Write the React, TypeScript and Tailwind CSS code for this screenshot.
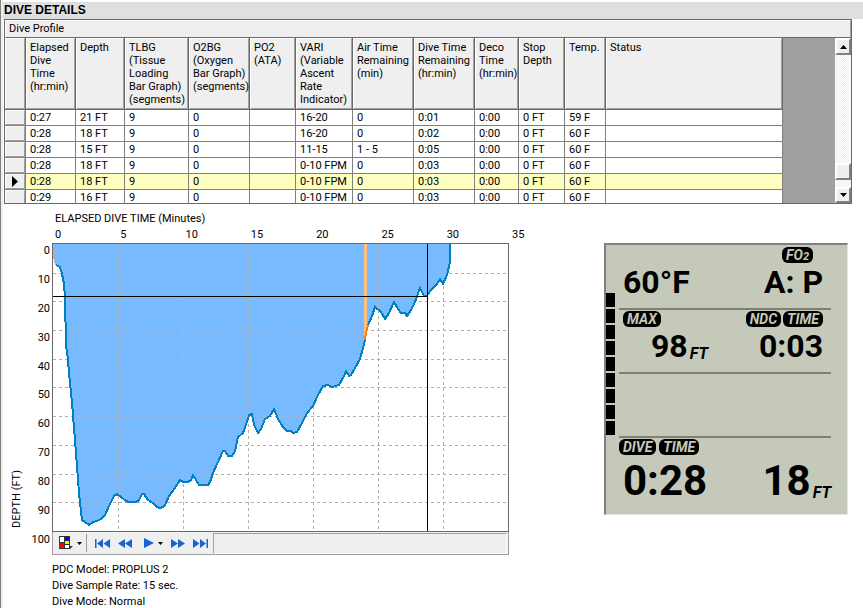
import React from "react";

const columns = [
  { label: "Elapsed\nDive\nTime\n(hr:min)", width: "w-[50px]" },
  { label: "Depth", width: "w-[49px]" },
  { label: "TLBG\n(Tissue\nLoading\nBar Graph)\n(segments)", width: "w-[64px]" },
  { label: "O2BG\n(Oxygen\nBar Graph)\n(segments)", width: "w-[61px]" },
  { label: "PO2\n(ATA)", width: "w-[46px]" },
  { label: "VARI\n(Variable\nAscent\nRate\nIndicator)", width: "w-[57px]" },
  { label: "Air Time\nRemaining\n(min)", width: "w-[61px]" },
  { label: "Dive Time\nRemaining\n(hr:min)", width: "w-[61px]" },
  { label: "Deco\nTime\n(hr:min)", width: "w-[44px]" },
  { label: "Stop\nDepth", width: "w-[46px]" },
  { label: "Temp.", width: "w-[41px]" },
  { label: "Status", width: "w-[177px]" },
];

const rows = [
  ["0:27", "21 FT", "9", "0", "", "16-20", "0", "0:01", "0:00", "0 FT", "59 F", ""],
  ["0:28", "18 FT", "9", "0", "", "16-20", "0", "0:02", "0:00", "0 FT", "60 F", ""],
  ["0:28", "15 FT", "9", "0", "", "11-15", "1 - 5", "0:05", "0:00", "0 FT", "60 F", ""],
  ["0:28", "18 FT", "9", "0", "", "0-10 FPM", "0", "0:03", "0:00", "0 FT", "60 F", ""],
  ["0:28", "18 FT", "9", "0", "", "0-10 FPM", "0", "0:03", "0:00", "0 FT", "60 F", ""],
  ["0:29", "16 FT", "9", "0", "", "0-10 FPM", "0", "0:03", "0:00", "0 FT", "60 F", ""],
];

const SELECTED_ROW = 4;

const raised =
  "border border-t-white border-l-white border-r-[#a0a0a0] border-b-[#a0a0a0] bg-[#efefef]";

const DiveTable = () => (
  <table className="table-fixed w-[778px] shrink-0 border-separate border-spacing-0 text-left">
    <thead>
      <tr className="h-[72px]">
        <th className="w-[21px] p-0 border-r border-b border-[#696969]">
          <div className={`h-[71px] ${raised}`} />
        </th>
        {columns.map((col) => (
          <th
            key={col.label}
            className={`${col.width} p-0 align-top font-normal leading-[13px] whitespace-pre border-r border-b border-[#696969]`}
          >
            <div className={`h-[71px] pl-[3px] pt-[2px] ${raised}`}>{col.label}</div>
          </th>
        ))}
      </tr>
    </thead>
    <tbody>
      {rows.map((row, r) => (
        <tr key={r} className={r === SELECTED_ROW ? "h-4 bg-[#ffffbf]" : "h-4 bg-white"}>
          <th className="p-0 border-r border-b border-[#808080]">
            <div className={`h-[15px] flex items-center justify-center ${raised}`}>
              {r === SELECTED_ROW && (
                <svg width="6" height="11" viewBox="0 0 6 11">
                  <path d="M0 0 L6 5.5 L0 11 Z" />
                </svg>
              )}
            </div>
          </th>
          {row.map((cell, c) => (
            <td
              key={c}
              className="p-0 pl-1 leading-[15px] whitespace-nowrap border-r border-b border-[#808080]"
            >
              {cell}
            </td>
          ))}
        </tr>
      ))}
    </tbody>
  </table>
);

const scrollButton =
  "w-4 shrink-0 flex items-center justify-center border-t-2 border-l-2 border-r-2 border-b-2 border-t-white border-l-white border-r-[#808080] border-b-[#808080] bg-[#efefef]";

const ScrollBar = () => (
  <div className="w-4 flex flex-col bg-[repeating-conic-gradient(#ffffff_0_25%,#efefef_0_50%)] bg-[size:2px_2px]">
    <button aria-label="Scroll up" className={`h-[17px] ${scrollButton}`}>
      <svg width="7" height="4" viewBox="0 0 7 4" className="shrink-0">
        <path d="M3.5 0 L7 4 H0 Z" />
      </svg>
    </button>
    <div className="flex-1" />
    <div className={`h-[17px] ${scrollButton}`} />
    <div className="h-[7px]" />
    <button aria-label="Scroll down" className={`h-4 ${scrollButton}`}>
      <svg width="7" height="4" viewBox="0 0 7 4" className="shrink-0">
        <path d="M0 0 H7 L3.5 4 Z" />
      </svg>
    </button>
  </div>
);

// Plot coordinates: left edge 52, surface line at 243, 65 units per 5 minutes.
const descent =
  "56,265 60,267 62,274 64,284 65,297 66,345 68,360 69,373 72,403 76,453 79,493 82,520 85,522 89,525 93,522 97,521 101,519 105,515 110,504 114,496 117,494 121,497 126,501 129,502 136,502 139,500 142,494 144,494 148,500 153,503 157,507 160,508 163,507 165,505 169,496 175,488 180,480 183,482 188,482 191,480 193,475 199,485 208,485 210,482 213,473 218,462 223,451 225,451 228,456 232,456 235,451 238,437 243,433 247,422 249,415 252,414 254,425 258,433 261,429 265,419 270,416 274,409 278,419 283,427 287,431 291,431 293,433 297,432 302,423 307,413 313,406 318,395 323,386 328,385 332,387 339,385 344,376 346,371 349,376 351,375 355,368 360,359 363,348 365,340";
const ascent =
  "368,325 372,316 375,307 381,312 385,319 389,313 394,302 398,309 401,313 405,313 407,316 411,310 415,302 420,288 424,296 427,296 430,291 437,284 440,279 443,284 447,275 450,262 450,244";

const verticals = [118, 183, 248, 313, 378, 443];
const horizontals = [273, 301, 330, 359, 387, 416, 445, 474, 502];

const GridLines = () => (
  <>
    {verticals.map((x) => (
      <line key={x} x1={x + 0.5} x2={x + 0.5} y1="244" y2="531" />
    ))}
    {horizontals.map((y) => (
      <line key={y} x1="53" x2="508" y1={y + 0.5} y2={y + 0.5} />
    ))}
  </>
);

const Plot = () => (
  <svg
    viewBox="52 243 457 289"
    className="block w-full h-auto"
    role="img"
    aria-label="Dive depth over time"
    shapeRendering="crispEdges"
  >
    <rect x="52" y="243" width="457" height="289" fill="#ffffff" />
    <g stroke="#b0b0b0" strokeDasharray="3 3">
      <GridLines />
    </g>
    <polygon points={`53,244 ${descent} ${ascent}`} fill="#78baff" />
    <clipPath id="water">
      <polygon points={`53,244 ${descent} ${ascent}`} />
    </clipPath>
    <g stroke="#b4b4b4" strokeDasharray="3 3" clipPath="url(#water)">
      <GridLines />
    </g>
    <polygon points="364,244 367,244 367,330 365,338 364,338" fill="#ffc080" />
    <g fill="none" strokeWidth="2">
      <polyline points="53,244 54,257 56,265" stroke="#b0b0b0" />
      <polyline points={descent} stroke="#0080c0" />
      <polyline points={ascent} stroke="#0080c0" />
      <polyline points="365,340 366,333 368,325" stroke="#ff8000" />
    </g>
    <g stroke="#000000">
      <line x1="53" x2="427" y1="296.5" y2="296.5" />
      <line x1="427.5" x2="427.5" y1="244" y2="531" />
    </g>
    <rect x="52.5" y="243.5" width="456" height="288" fill="none" stroke="#696969" />
  </svg>
);

const Caret = () => (
  <svg width="5" height="3" viewBox="0 0 5 3">
    <path d="M0 0 H5 L2.5 3 Z" />
  </svg>
);

const PlayerBar = () => (
  <div className="h-[23px] flex items-stretch border border-t-0 border-[#a0a0a0] bg-[#efefef]">
    <button aria-label="Colors" className="w-[33px] pl-[6px] flex items-center gap-1 shrink-0">
      <svg width="14" height="14" viewBox="0 0 14 14">
        <path d="M0 0 H11 V10 H14 L11 13 H0 Z" fill="#333333" />
        <path d="M1 1 H5 V6 H1 Z M6 9 H10 V12 H6 Z" fill="#ffffff" />
        <path d="M6 1 H10 V4 H6 Z" fill="#0000ff" />
        <path d="M6 5 H10 V8 H6 Z" fill="#ffee00" />
        <path d="M0 7 H5 V12 H0 Z" fill="#ff0000" />
      </svg>
      <Caret />
    </button>
    <div className="w-px my-[2px] bg-[#a09c94]" />
    <div className="w-[126px] shrink-0 flex items-center pl-2 gap-2">
      <button aria-label="First">
        <svg width="15" height="9" viewBox="0 0 15 9" fill="#1464d2">
          <path d="M0 0 H1.5 V9 H0 Z M8 0 V9 L2 4.500 Z M15 0 V9 L8.500 4.500 Z" />
        </svg>
      </button>
      <button aria-label="Rewind">
        <svg width="14" height="9" viewBox="0 0 14 9" fill="#1464d2">
          <path d="M7 0 V9 L0 4.500 Z M14 0 V9 L7 4.500 Z" />
        </svg>
      </button>
      <button aria-label="Play" className="flex items-center gap-1 pl-1">
        <svg width="10" height="10" viewBox="0 0 10 10" fill="#1464d2">
          <path d="M0 0 L10 5 L0 10 Z" />
        </svg>
        <Caret />
      </button>
      <button aria-label="Forward">
        <svg width="14" height="9" viewBox="0 0 14 9" fill="#1464d2">
          <path d="M0 0 L7 4.500 L0 9 Z M7 0 L14 4.500 L7 9 Z" />
        </svg>
      </button>
      <button aria-label="Last">
        <svg width="15" height="9" viewBox="0 0 15 9" fill="#1464d2">
          <path d="M0 0 L6.500 4.500 L0 9 Z M7 0 L13 4.500 L7 9 Z M13.500 0 H15 V9 H13.500 Z" />
        </svg>
      </button>
    </div>
    <div className="flex-1 mt-px mr-px border border-t-[#a0a0a0] border-l-[#a0a0a0] border-r-white border-b-white" />
  </div>
);

const Pill = ({ children }: { children: React.ReactNode }) => (
  <span className="h-4 px-1 rounded-[6px] bg-black text-[#c5c9b9] text-[14px] leading-4 font-bold italic">
    {children}
  </span>
);

const digits = "text-[32px] leading-[27px] font-bold";
const unit = "text-[16px] leading-3 font-bold italic";

const DiveComputer = () => (
  <div className="w-[244px] h-[272px] shrink-0 flex border-t-2 border-l-2 border-r border-b border-t-[#808080] border-l-[#808080] border-r-[#e3e3e3] border-b-[#e3e3e3] bg-[#c5c9b9]">
    <div className="w-[9px] pt-12 flex flex-col gap-[2px]">
      {[1, 2, 3, 4, 5, 6, 7, 8, 9].map((i) => (
        <div key={i} className="h-[14px] bg-black" />
      ))}
    </div>
    <div className="flex-1 ml-1 mr-4 flex flex-col">
      <div className="h-[65px] pt-[2px] px-1 border-b-2 border-[#808070]">
        <div className="flex justify-end pr-[14px]">
          <Pill>
            FO<span className="text-[11px]">2</span>
          </Pill>
        </div>
        <div className={`flex justify-between pt-[6px] pr-1 ${digits}`}>
          <span>60°F</span>
          <span>A: P</span>
        </div>
      </div>
      <div className="h-16 pt-px px-1 border-b-2 border-[#808070]">
        <div className="flex gap-[2px] pr-1">
          <Pill>MAX</Pill>
          <span className="flex-1" />
          <Pill>NDC</Pill>
          <Pill>TIME</Pill>
        </div>
        <div className={`flex justify-between items-end pt-[6px] pl-7 pr-1 ${digits}`}>
          <span className="flex items-end gap-[2px]">
            98<span className={unit}>FT</span>
          </span>
          <span>0:03</span>
        </div>
      </div>
      <div className="h-16 border-b-2 border-[#808070]" />
      <div className="pt-px">
        <div className="flex gap-[3px]">
          <Pill>DIVE</Pill>
          <Pill>TIME</Pill>
        </div>
        <div className="flex justify-between items-end pt-[7px] pl-1 text-[42px] leading-[37px] font-bold">
          <span>0:28</span>
          <span className="flex items-end gap-[2px]">
            18<span className={unit}>FT</span>
          </span>
        </div>
      </div>
    </div>
  </div>
);

export default function App() {
  return (
    <div className="min-h-screen border-l border-[#808080] bg-white text-[11px] text-black font-[Roboto,'Liberation_Sans',sans-serif]">
      <div className="border-l-2 border-[#efefef]">
        <header className="h-[19px] border-t-2 border-white bg-[#dfdfdf] pl-px">
          <h1 className="text-[12px] leading-4 font-bold font-['Liberation_Sans',Arial,sans-serif]">
            DIVE DETAILS
          </h1>
        </header>

        <section className="ml-px mr-[11px] border border-[#696969]">
          <h2 className="h-[18px] pl-[3px] leading-4 border border-t-white border-l-white border-r-[#a0a0a0] border-b-[#696969] bg-[#efefef]">
            Dive Profile
          </h2>
          <div className="flex h-[165px] overflow-hidden">
            <DiveTable />
            <div className="flex-1 bg-[#a0a0a0]" />
            <ScrollBar />
          </div>
        </section>

        <main className="flex justify-between pt-2 pl-2 pr-[15px]">
          <div className="flex flex-1">
            <div className="w-3 shrink-0 pt-[258px] flex items-start">
              <span className="[writing-mode:vertical-rl] rotate-180 whitespace-nowrap leading-3">
                DEPTH (FT)
              </span>
            </div>
            <div className="w-[29px] h-[302px] mt-8 pr-[2px] shrink-0 flex flex-col justify-between text-right leading-[13px]">
              {[0, 10, 20, 30, 40, 50, 60, 70, 80, 90, 100].map((depth) => (
                <span key={depth}>{depth}</span>
              ))}
            </div>
            <div className="flex-1 max-w-[457px]">
              <p className="pl-[3px] leading-[13px]">ELAPSED DIVE TIME (Minutes)</p>
              <div className="flex pt-[3px] pb-[2px] leading-[13px]">
                {[0, 5, 10, 15, 20, 25, 30, 35].map((minute) => (
                  <span key={minute} className="w-1/7 shrink-0 pl-[3px]">
                    {minute}
                  </span>
                ))}
              </div>
              <Plot />
              <PlayerBar />
              <div className="pt-[9px] flex flex-col gap-1 leading-3">
                <p>PDC Model: PROPLUS 2</p>
                <p>Dive Sample Rate: 15 sec.</p>
                <p>Dive Mode: Normal</p>
              </div>
            </div>
          </div>
          <div className="pt-[31px]">
            <DiveComputer />
          </div>
        </main>
      </div>
    </div>
  );
}
